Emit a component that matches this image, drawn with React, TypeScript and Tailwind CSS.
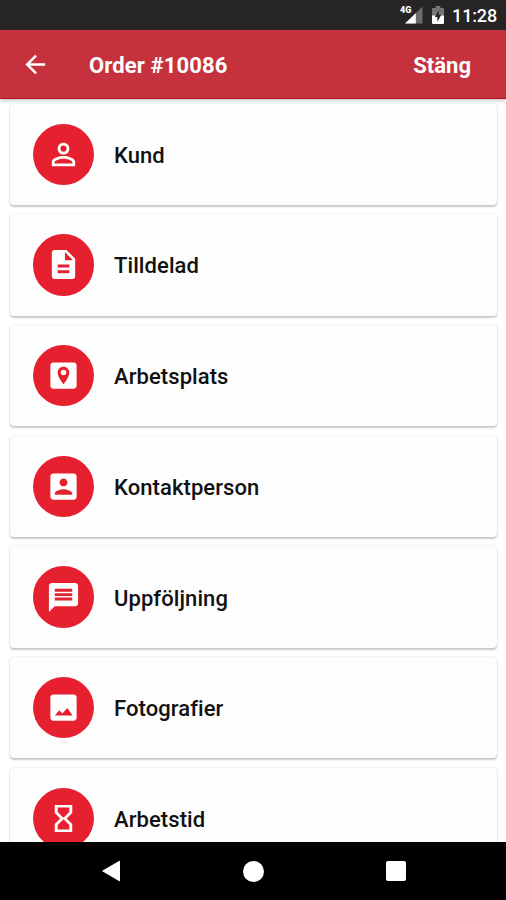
const items = [
  {
    label: 'Kund',
    path: 'M12 5.9a2.1 2.1 0 1 1 0 4.2 2.1 2.1 0 0 1 0-4.2m0 9c2.97 0 6.1 1.46 6.1 2.1v1.1H5.9V17c0-.64 3.13-2.1 6.1-2.1M12 4C9.79 4 8 5.79 8 8s1.79 4 4 4 4-1.79 4-4-1.79-4-4-4zm0 9c-2.67 0-8 1.34-8 4v3h16v-3c0-2.66-5.33-4-8-4z',
  },
  {
    label: 'Tilldelad',
    path: 'M14 2H6c-1.1 0-1.99.9-1.99 2L4 20c0 1.1.89 2 1.99 2H18c1.1 0 2-.9 2-2V8l-6-6zm2 16H8v-2h8v2zm0-4H8v-2h8v2zm-3-5V3.5L18.5 9H13z',
  },
  {
    label: 'Arbetsplats',
    path: 'M19 3H5c-1.1 0-2 .9-2 2v14c0 1.1.9 2 2 2h14c1.1 0 2-.9 2-2V5c0-1.1-.9-2-2-2zm-7 15s-4-4.85-4-7.9C8 7.76 9.79 6 12 6s4 1.76 4 4.1c0 3.05-4 7.9-4 7.9zM12 8.100a1.9 1.9 0 1 0 0 3.8 1.9 1.9 0 0 0 0-3.8z',
  },
  {
    label: 'Kontaktperson',
    path: 'M3 5v14c0 1.1.89 2 2 2h14c1.1 0 2-.9 2-2V5c0-1.1-.9-2-2-2H5c-1.11 0-2 .9-2 2zm11.700 4.200c0 1.500-1.200 2.700-2.700 2.700s-2.700-1.200-2.700-2.700 1.200-2.700 2.700-2.700 2.700 1.200 2.700 2.700zM6 17c0-2 4-3.1 6-3.1s6 1.1 6 3.1v.6H6V17z',
  },
  {
    label: 'Uppföljning',
    path: 'M20 2H4c-1.1 0-1.99.9-1.99 2L2 22l4-4h14c1.1 0 2-.9 2-2V4c0-1.1-.9-2-2-2zm-2 12H6v-2h12v2zm0-3H6V9h12v2zm0-3H6V6h12v2z',
  },
  {
    label: 'Fotografier',
    path: 'M21 19V5c0-1.1-.9-2-2-2H5c-1.1 0-2 .9-2 2v14c0 1.1.9 2 2 2h14c1.1 0 2-.9 2-2zM9.100 13.900l2.100 2.200L14.600 12.400l3.600 5H6.100l3-3.500z',
  },
  {
    label: 'Arbetstid',
    path: 'M6 2.700v5.600L9.800 12 6 15.700v5.600h12v-5.600L14.200 12 18 8.300V2.700H6zm10 13.700v3.100H8v-3.100l4-3.900 4 3.900zm-4-4.900L8 7.600V4.500h8v3.100l-4 3.900z',
  },
];

function StatusBar() {
  return (
    <div className="flex h-[30px] shrink-0 items-center justify-end bg-[#262425] pr-[9px] text-white">
      <svg width="23" height="20" viewBox="0 0 23 20" className="mr-[9px]">
        <path d="M22.500 1.500v17H5z" fill="#6b6969" />
        <path d="M15.800 8.200v10.300H5z" fill="#fff" />
        <text x="0" y="8.200" fontSize="9" fontWeight="900" fill="#fff" fontFamily="Roboto, sans-serif" textLength="11.500">4G</text>
      </svg>
      <svg width="12" height="18" viewBox="0 0 13 19" className="mr-[8px]" preserveAspectRatio="none">
        <path d="M4 0h5v2h3.200q.8 0 .8.800V11H0V2.800Q0 2 .8 2H4z" fill="#777575" />
        <path d="M0 10h13v8a1 1 0 0 1-1 1H1a1 1 0 0 1-1-1z" fill="#fff" />
        <path d="M7.300 4.500 3 11.500h2.800V16.500L10 9.500H7.300z" fill="#262425" />
      </svg>
      <span className="relative top-[0.500px] text-[18px] leading-none font-medium tracking-[-0.150px]">11:28</span>
    </div>
  );
}

function AppBar() {
  return (
    <header className="z-10 flex h-[69px] shrink-0 items-center border-b border-[#b4121b] bg-[#c5323e] pr-[35px] pl-[18px] text-[22px] font-bold text-white shadow-[0_2px_3px_rgba(0,0,0,0.2)]">
      <svg width="35" height="35" viewBox="0 0 24 24" fill="currentColor">
        <path d="M18.600 11.200H8.300l4.700-4.700-1.200-1.200L5.100 12l6.700 6.700 1.200-1.200-4.700-4.700h10.300z" />
      </svg>
      <h1 className="ml-[36px] flex-1 pt-[2px] tracking-[0.120px]">Order #10086</h1>
      <button className="pt-[2px] font-bold">Stäng</button>
    </header>
  );
}

export default function App() {
  return (
    <div className="flex h-[900px] w-[506px] flex-col overflow-hidden bg-white font-['Roboto',sans-serif]">
      <StatusBar />
      <AppBar />
      <main className="flex min-h-0 flex-1 flex-col gap-[9.2px] overflow-hidden pt-[4.500px] pr-[9px] pl-[10px]">
        {items.map((item) => (
          <div
            key={item.label}
            className="flex h-[101.5px] shrink-0 items-center rounded-[4px] bg-[#fdfdfd] pl-[22.5px] shadow-[0_1.5px_2px_rgba(0,0,0,0.2),0_0_2px_rgba(0,0,0,0.12)]"
          >
            <div className="flex size-[61.5px] items-center justify-center rounded-full bg-[#e6202e]">
              <svg width="35" height="35" viewBox="0 0 24 24" fill="#fff" fillRule="evenodd">
                <path d={item.path} />
              </svg>
            </div>
            <span className="ml-[20px] pt-[2px] text-[22px] font-medium tracking-[0.080px] text-[#111]">{item.label}</span>
          </div>
        ))}
      </main>
      <nav className="flex h-[58px] shrink-0 items-center justify-between bg-black pr-[100px] pl-[102px]">
        <svg width="18" height="22" viewBox="0 0 18 22" fill="#fff">
          <path d="M18 1.500v19q0 1-1 .5L.7 11.600q-.8-.6 0-1.200L17 1q1-.5 1 .5z" />
        </svg>
        <div className="size-[21px] rounded-full bg-white" />
        <div className="size-[20px] rounded-[2px] bg-white" />
      </nav>
    </div>
  );
}
